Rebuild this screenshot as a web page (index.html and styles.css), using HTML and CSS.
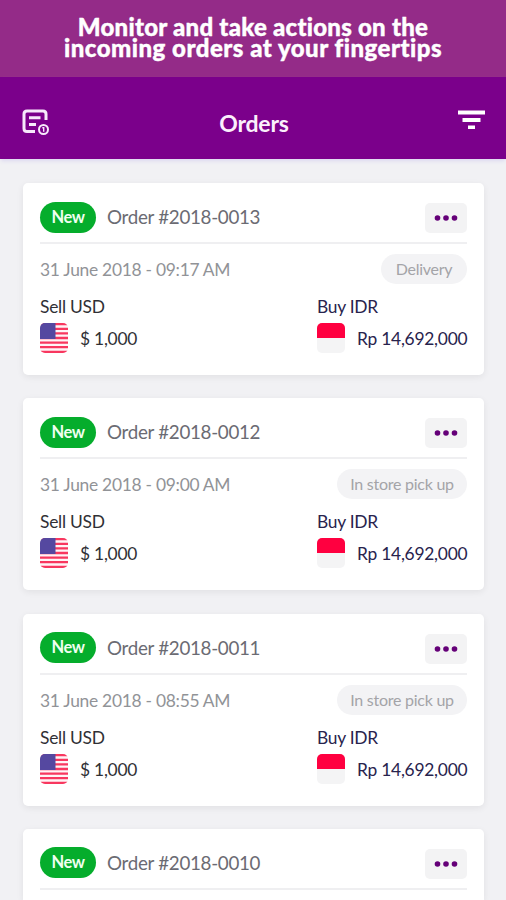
FILE: index.html
```html
<!DOCTYPE html>
<html lang="en">
<head>
    <meta charset="UTF-8">
    <meta name="viewport" content="width=device-width, initial-scale=1.0">
    <title>Orders</title>
    <link rel="stylesheet" href="styles.css">
</head>
<body>
    <!-- shared flags -->
    <svg class="sprite" width="0" height="0">
        <symbol id="flag-us" viewBox="0 0 28 30">
            <rect width="28" height="30" fill="#fff4f6"/>
            <path d="M0 1.2h28M0 5.8h28M0 10.4h28M0 15h28M0 19.6h28M0 24.2h28M0 28.8h28" stroke="#f8375f" stroke-width="2.3"/>
            <rect width="15.5" height="16" fill="#5548a0"/>
        </symbol>
        <symbol id="flag-id" viewBox="0 0 28 30">
            <rect width="28" height="30" fill="#f4f4f5"/>
            <rect width="28" height="15" fill="#ff0040"/>
        </symbol>
        <symbol id="dots" viewBox="0 0 24 6">
            <circle cx="3.5" cy="3" r="2.8"/>
            <circle cx="12" cy="3" r="2.8"/>
            <circle cx="20.5" cy="3" r="2.8"/>
        </symbol>
    </svg>

    <div class="banner">
        Monitor and take actions on the<br>
        <span class="banner-bottom">incoming orders at your fingertips</span>
    </div>

    <header class="navbar">
        <svg class="report-icon" width="28" height="28" viewBox="0 0 28 28" fill="none" stroke="#f7e9fb">
            <path d="M24 12V6Q24 3 21 3H5Q2 3 2 6V20.500Q2 23.500 5 23.500H13" stroke-width="3"/>
            <path d="M7 9.700H18.500M7 16.500H14" stroke-width="3"/>
            <circle cx="21.500" cy="21.500" r="4.500" stroke-width="2"/>
            <path d="M20.300 19.800H21.700V23.800" stroke-width="1.400"/>
        </svg>
        <h1>Orders</h1>
        <svg class="filter-icon" width="27" height="20" viewBox="0 0 27 20" fill="#fff">
            <rect y="0.500" width="27" height="4"/>
            <rect x="4.500" y="8" width="18" height="4"/>
            <rect x="10" y="15.500" width="7" height="3.500"/>
        </svg>
    </header>

    <main class="orders">
        <div class="card">
            <div class="card-head">
                <span class="badge">New</span>
                <span class="order-no">Order #2018-0013</span>
                <button class="more"><svg width="24" height="6"><use href="#dots"/></svg></button>
            </div>
            <div class="card-info">
                <span class="date">31 June 2018 - 09:17 AM</span>
                <span class="pill delivery">Delivery</span>
            </div>
            <div class="card-money">
                <div class="sell">
                    <p>Sell USD</p>
                    <div class="amount"><svg class="flag"><use href="#flag-us"/></svg><span>$ 1,000</span></div>
                </div>
                <div class="buy">
                    <p>Buy IDR</p>
                    <div class="amount"><svg class="flag"><use href="#flag-id"/></svg><span>Rp 14,692,000</span></div>
                </div>
            </div>
        </div>

        <div class="card">
            <div class="card-head">
                <span class="badge">New</span>
                <span class="order-no">Order #2018-0012</span>
                <button class="more"><svg width="24" height="6"><use href="#dots"/></svg></button>
            </div>
            <div class="card-info">
                <span class="date">31 June 2018 - 09:00 AM</span>
                <span class="pill">In store pick up</span>
            </div>
            <div class="card-money">
                <div class="sell">
                    <p>Sell USD</p>
                    <div class="amount"><svg class="flag"><use href="#flag-us"/></svg><span>$ 1,000</span></div>
                </div>
                <div class="buy">
                    <p>Buy IDR</p>
                    <div class="amount"><svg class="flag"><use href="#flag-id"/></svg><span>Rp 14,692,000</span></div>
                </div>
            </div>
        </div>

        <div class="card">
            <div class="card-head">
                <span class="badge">New</span>
                <span class="order-no">Order #2018-0011</span>
                <button class="more"><svg width="24" height="6"><use href="#dots"/></svg></button>
            </div>
            <div class="card-info">
                <span class="date">31 June 2018 - 08:55 AM</span>
                <span class="pill">In store pick up</span>
            </div>
            <div class="card-money">
                <div class="sell">
                    <p>Sell USD</p>
                    <div class="amount"><svg class="flag"><use href="#flag-us"/></svg><span>$ 1,000</span></div>
                </div>
                <div class="buy">
                    <p>Buy IDR</p>
                    <div class="amount"><svg class="flag"><use href="#flag-id"/></svg><span>Rp 14,692,000</span></div>
                </div>
            </div>
        </div>

        <!-- cut off by the bottom of the screen -->
        <div class="card card-last">
            <div class="card-head">
                <span class="badge">New</span>
                <span class="order-no">Order #2018-0010</span>
                <button class="more"><svg width="24" height="6"><use href="#dots"/></svg></button>
            </div>
            <div class="card-info">
                <span class="date"></span>
                <span class="pill delivery"></span>
            </div>
        </div>
    </main>
</body>
</html>
```
FILE: styles.css
```css
* {
    box-sizing: border-box;
}

body {
    font-family: Lato, "Open Sans", sans-serif;
    background-color: #f1f1f4;
    margin: 0;
    height: 900px;
    overflow: hidden;
}

.sprite {
    display: block;
}

.banner {
    height: 77px;
    padding-top: 16px;
    background-color: #942b88;
    color: #fff;
    font-weight: 900;
    font-size: 24px;
    line-height: 21px;
    letter-spacing: 0.25px;
    text-align: center;
    white-space: nowrap;
    -webkit-text-stroke: 0.4px #fff;
}

.banner-bottom {
    letter-spacing: 0.5px;
}

.navbar {
    display: flex;
    align-items: center;
    justify-content: space-between;
    height: 82px;
    padding: 8px 21px 0 22px;
    background-color: #7b008b;
    box-shadow: 0 3px 4px -1px #dcd8f0;
}

.navbar h1 {
    margin: 2px 0 0;
    color: #fbeffc;
    font-size: 23px;
    line-height: 28px;
    font-weight: 700;
    letter-spacing: -0.2px;
}

.filter-icon {
    margin-bottom: 4px;
}

.orders {
    display: flex;
    flex-direction: column;
    gap: 23.3px;
    height: 741px;
    padding: 24px 22px 0 23px;
    overflow: hidden;
}

.card {
    flex: none;
    height: 192px;
    padding: 0 17px;
    background-color: #fff;
    border-radius: 5px;
    box-shadow: 0 2px 7px rgba(0, 0, 0, 0.07);
}

.card-last {
    height: 72px;
    border-radius: 5px 5px 0 0;
    overflow: hidden;
}

.card-head {
    display: flex;
    align-items: center;
    height: 61px;
    padding-top: 9px;
    border-bottom: 2.5px solid #efeff1;
}

.badge {
    width: 56px;
    height: 31px;
    border-radius: 16px;
    background-color: #05ad2c;
    color: #effff0;
    font-size: 16.5px;
    line-height: 30px;
    font-weight: 700;
    letter-spacing: -0.4px;
    text-align: center;
}

.order-no {
    margin-left: 11px;
    color: #6b6b73;
    font-size: 18.8px;
    line-height: 30px;
    letter-spacing: -0.3px;
}

.more {
    display: flex;
    align-items: center;
    justify-content: center;
    width: 42px;
    height: 30px;
    margin-top: 2px;
    margin-left: auto;
    padding: 0;
    border: none;
    border-radius: 5px;
    background-color: #f3f3f4;
    fill: #650078;
}

.card-info {
    display: flex;
    justify-content: space-between;
    padding-top: 10px;
}

.date {
    color: #919397;
    font-size: 17.4px;
    line-height: 31px;
    letter-spacing: -0.27px;
}

.pill {
    width: 130px;
    height: 30px;
    border-radius: 15px;
    background-color: #f3f3f5;
    color: #a4a4a8;
    font-size: 16px;
    line-height: 29px;
    letter-spacing: -0.25px;
    text-align: center;
}

.delivery {
    width: 86px;
}

.card-money {
    display: flex;
    justify-content: space-between;
    margin-top: 10px;
    color: #303035;
    font-size: 17.4px;
    letter-spacing: -0.25px;
}

.card-money p {
    margin: 0 0 5px;
    line-height: 23px;
}

.buy {
    width: 150px;
    color: #28234d;
}

.amount {
    display: flex;
    align-items: flex-start;
    gap: 12px;
    line-height: 32px;
    white-space: nowrap;
}

.flag {
    flex: none;
    width: 28px;
    height: 30px;
    border-radius: 5px;
}
```
